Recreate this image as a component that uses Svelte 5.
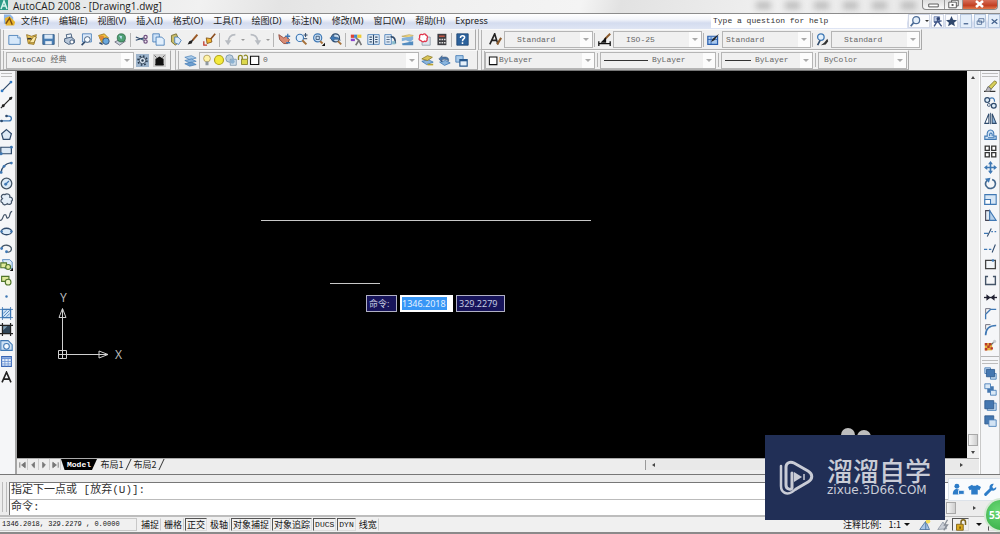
<script>
  const N = '#2f4a6b';
  const B = '#3f78b4';
  const icons = {
    new: `<path d="M1 3h11l3 3v8H1z" fill="#d6e8fa" stroke="${B}"/><path d="M12 3v3h3" fill="#fff" stroke="${B}"/>`,
    open: `<path d="M2 2l6 2 6-2-3 12-7-1z" fill="#f0c95a" stroke="#8a6a1c"/><path d="M5 12l6-8 3 1-3 7z" fill="#fbe9a8" stroke="#8a6a1c"/><path d="M3 7h5" stroke="#333" stroke-width="2"/>`,
    save: `<path d="M1 2h14v12H1z" fill="#4a7fb5" stroke="#2c5580"/><path d="M3 2h10v5H3z" fill="#dbe9f7"/><path d="M4 10h8v4H4z" fill="#e8eef5"/>`,
    print: `<path d="M4 2l6-1 1 5-6 1z" fill="#eef4fa" stroke="${N}"/><path d="M2 7l8-2 4 3v4l-7 2-5-3z" fill="#b9c8da" stroke="${N}"/><circle cx="11" cy="11" r="2.5" fill="#fff" stroke="${N}"/>`,
    preview: `<path d="M3 1h11v10H3z" fill="#dceafa" stroke="${B}"/><circle cx="9" cy="8" r="3.5" fill="#f6fbff" stroke="${N}"/><path d="M6 11l-4 4" stroke="${N}" stroke-width="2"/>`,
    publish: `<path d="M2 3l7-2 5 5-8 6z" fill="#f2c340" stroke="#9a741a"/><circle cx="6" cy="6" r="3" fill="#e08a35"/><circle cx="11" cy="10" r="4" fill="#6aa8dc" stroke="${N}"/><path d="M3 12l4 2" stroke="${N}" stroke-width="2"/>`,
    globe: `<path d="M1 11l8-4 5 3-7 5z" fill="#c9d2dc" stroke="#667"/><circle cx="9" cy="6" r="5" fill="#4f9f74" stroke="#2e6b48"/><path d="M6 3l4 1-1 4z" fill="#b9e2f2"/>`,
    cut: `<path d="M1 5l10 4M1 9l10-3" stroke="${N}" stroke-width="1.4"/><circle cx="13" cy="10.500" r="2" fill="none" stroke="#715080" stroke-width="1.5"/><circle cx="13" cy="5" r="2" fill="none" stroke="#715080" stroke-width="1.5"/>`,
    copy: `<path d="M1 1h8v10H1z" fill="#cfe3f8" stroke="${B}"/><path d="M5 5h7l3 3v7H5z" fill="#e2effc" stroke="${B}"/>`,
    paste: `<path d="M3 3l6-2 4 9-5 5-5-4z" fill="#c9bd6b" stroke="#6d6428"/><path d="M7 5h4l4 4-3 5-5-2z" fill="#dcebfa" stroke="${B}"/>`,
    brush: `<path d="M14 2L8 9" stroke="#9b5a28" stroke-width="2.5"/><path d="M9 8l-2 5-5 1 2-4z" fill="#222"/>`,
    block: `<path d="M15 1L9 8" stroke="#8b4d20" stroke-width="2"/><path d="M4 6l6 1 1 4-6 2z" fill="#f1b735" stroke="#7a4c10"/><path d="M1 10v5h4" fill="none" stroke="#c0392b" stroke-width="1.6"/>`,
    undo: `<path d="M14 2C8 2 5 6 5 13" fill="none" stroke="#b8bcc2" stroke-width="2"/><path d="M1 9h8l-4 6z" fill="#b8bcc2"/>`,
    redo: `<path d="M2 2c6 0 9 4 9 11" fill="none" stroke="#b8bcc2" stroke-width="2"/><path d="M7 9h8l-4 6z" fill="#b8bcc2"/>`,
    pan: `<path d="M1 2l6 4 3-2 4 4-2 5H7L2 8z" fill="#d98b74" stroke="#8a3f30"/><path d="M12 1v6M9 4h6M10 12h5" stroke="${B}" stroke-width="1.6"/>`,
    zoomrt: `<circle cx="6" cy="6" r="4.5" fill="#e1effc" stroke="${B}" stroke-width="1.4"/><path d="M9 9l5 5" stroke="#a6713a" stroke-width="2.4"/><path d="M13 0v5M10.500 2.500h5M11 7h4" stroke="${N}" stroke-width="1.2"/>`,
    zoomwin: `<circle cx="7" cy="6" r="5" fill="#c9dff4" stroke="${B}" stroke-width="1.4"/><path d="M5 4h4v4H5z" fill="none" stroke="${N}"/><path d="M10 10l3 3" stroke="#a6713a" stroke-width="2.400"/><path d="M16 12v4h-4z" fill="#111"/>`,
    zoomprev: `<circle cx="8" cy="6" r="5" fill="#c9dff4" stroke="${N}" stroke-width="1.4"/><path d="M1 6l5-4v3c5 0 6 1 8 4-3-2-5-1-8-1v3z" fill="${B}" stroke="${N}" stroke-width=".6"/><path d="M11 10l4 4" stroke="#a6713a" stroke-width="2.4"/>`,
    props: `<path d="M1 2h4v4H1z" fill="#d43"/><path d="M5 2h4v4H5z" fill="#48c"/><path d="M9 2h5v4H9z" fill="#ec3"/><path d="M1 7h5v3H1z" fill="#84c"/><path d="M7 6l4 3 3 6M11 9l-4 6" stroke="#777" stroke-width="2" fill="none"/>`,
    grid: `<path d="M1 2h14v12H1z" fill="#e6f0fa" stroke="${B}"/><path d="M8 2v12M3 5h3M3 8h3M3 11h3M10 5h3M10 8h3M10 11h3" stroke="${N}" stroke-width="1.4"/>`,
    palette: `<path d="M1 2h8v12H1z" fill="#e6f0fa" stroke="${B}"/><path d="M3 5h4M3 8h4M3 11h4" stroke="${N}"/><path d="M8 5c5-1 6 3 6 8" fill="none" stroke="${N}" stroke-width="2"/><path d="M10 10h4v4h-4z" fill="#8bc"/>`,
    sheet: `<path d="M1 4l9-2 5 1-3 3z" fill="#f0d680" stroke="#a58a35" stroke-width=".6"/><path d="M1 6l14-2v4l-4 3-5-2-5 1z" fill="#82b1da"/><path d="M1 13l14-3v5H2z" fill="#538cc0"/>`,
    markup: `<path d="M5 5h10v10H5z" fill="#dbe5ee" stroke="#8a97a5"/><path d="M2 3c1-2 3-1 4-1 2-2 4 0 4 1 2 0 2 3 1 4 1 3-2 4-3 3-2 2-4 0-5-1-2 0-2-2-1-3z" fill="#fff" stroke="#e0354b" stroke-width="1.6"/>`,
    calc: `<path d="M3 1h11v14H3z" fill="#3c3c40"/><path d="M5 3h7v2H5z" fill="#b54"/><path d="M5 7h2v2H5zM8 7h2v2H8zM11 7h2v2h-2zM5 11h2v2H5zM8 11h2v2H8zM11 11h2v2h-2z" fill="#ddd"/>`,
    help: `<path d="M1 1h14v14H1z" fill="#2c629c" stroke="#1c4472"/><path d="M5.500 6c0-4 6-3 5 0-.500 1.500-2.500 1.500-2.500 4M8 11.500v2" stroke="#fff" stroke-width="1.900" fill="none"/>`,
    textstyle: `<path d="M1 14L7 1l4 13M4 9h5" fill="none" stroke="#222" stroke-width="2"/><path d="M15 6l-5 8" stroke="#8b5a2b" stroke-width="2.600"/>`,
    dimstyle: `<path d="M1 13h14M1 10v6M15 10v6" stroke="#111" stroke-width="1.600"/><path d="M15 1L8 8" stroke="#8b5a2b" stroke-width="2.400"/><path d="M10 5l-7 7h7z" fill="#111"/>`,
    tablestyle: `<path d="M1 4h12v10H1z" fill="#a8c8ee" stroke="#2a5fae" stroke-width="1.500"/><path d="M1 8h12M5 5v9" stroke="#2a5fae"/><path d="M15 1L9 9l-4 2 2-4z" fill="#222"/>`,
    mleader: `<circle cx="6" cy="5" r="4" fill="#e4f1fc" stroke="${B}" stroke-width="1.600"/><path d="M5 9l-3 6" stroke="${N}" stroke-width="2"/><path d="M14 7l-4 5-4 3 6-1 3-4z" fill="#333"/>`,
    gear: `<path d="M0 0h16v16H0z" fill="#9db4cc"/><circle cx="8" cy="8" r="5.500" fill="none" stroke="#26384b" stroke-width="2" stroke-dasharray="2 2.300"/><circle cx="8" cy="8" r="4" fill="#d7e3ef" stroke="#26384b"/><circle cx="8" cy="8" r="1.500" fill="#26384b"/>`,
    myws: `<path d="M0 0h16v16H0z" fill="#cfcfcf"/><path d="M3 6l5-3 5 3v8H3z" fill="#111"/><path d="M2 2l12 12M14 2L2 14" stroke="#111" stroke-dasharray="2 1.500"/>`,
    layers: `<path d="M1 4l8-2 6 3-8 2z" fill="#a9cbea" stroke="${B}" stroke-width=".8"/><path d="M1 8l8-2 6 3-8 2z" fill="#8cb6de" stroke="${B}" stroke-width=".8"/><path d="M1 12l8-2 6 3-8 2z" fill="#6d9fd0" stroke="${B}" stroke-width=".8"/>`,
    bulb: `<circle cx="8" cy="6" r="4.500" fill="#fff3a8" stroke="#a7904a"/><path d="M6 10h4v5H6z" fill="#8f98a0"/>`,
    sun: `<circle cx="8" cy="8" r="6" fill="#f4ea3c" stroke="#b0a31d" stroke-width="1.500"/>`,
    freeze: `<circle cx="6" cy="6" r="5" fill="#bccedd" stroke="#6b89a6"/><path d="M7 7h8v8H7z" fill="#d8e4ee" stroke="#6b89a6"/><circle cx="10" cy="10" r="3" fill="#8db2d2"/>`,
    unlock: `<path d="M2 8V4c0-3 5-3 5 0v4" fill="none" stroke="#8f8a24" stroke-width="1.800"/><path d="M6 7h8v7H6z" fill="#dcd84d" stroke="#77721a"/><path d="M9 3c3-3 6-1 5 4" fill="none" stroke="#8f8a24" stroke-width="1.400"/>`,
    box: `<path d="M2 3h11v11H2z" fill="#fff" stroke="#111" stroke-width="1.500"/>`,
    layprev: `<path d="M1 9l8-2 6 3-8 3z" fill="#8cb6de" stroke="${B}"/><path d="M1 6l7-4 6 2-6 4z" fill="#d9c458" stroke="#8c7a22"/><path d="M8 13h7" stroke="#bba32d" stroke-width="2"/>`,
    layback: `<path d="M2 10l7-2 6 3-7 3z" fill="#8cb6de" stroke="${B}"/><path d="M1 6l4-4v2c5-1 9 0 8 5-2-2-4-3-8-2v3z" fill="#4c76a8" stroke="${N}" stroke-width=".6"/>`,
    laystate: `<path d="M1 2h9v8H1z" fill="#a9cbea" stroke="${B}"/><path d="M6 7h9v8H6z" fill="#e6f1fb" stroke="#27588d" stroke-width="1.400"/><path d="M6 7h9v2H6z" fill="#27588d"/>`,
    line: `<path d="M2 14L14 2" stroke="${N}" stroke-width="1.500"/><circle cx="2.500" cy="13.500" r="1.700" fill="#2f79c4"/><circle cx="13.500" cy="2.500" r="1.700" fill="#2f79c4"/>`,
    xline: `<path d="M1 15L15 1" stroke="#222" stroke-width="1.500"/><circle cx="4" cy="12" r="1.800" fill="#222"/><circle cx="13" cy="3" r="1.800" fill="#222"/>`,
    pline: `<path d="M0 11h11c4 0 4-6 0-6H8" fill="none" stroke="${B}" stroke-width="1.600"/><circle cx="8" cy="5" r="1.600" fill="${N}"/><circle cx="2" cy="11" r="1.600" fill="${N}"/>`,
    polygon: `<path d="M8 2l6 5-2 7H4L2 7z" fill="#dde9f5" stroke="${N}" stroke-width="1.500"/>`,
    rect: `<path d="M1 4h13v8H1z" fill="#dde9f5" stroke="${N}" stroke-width="1.500"/><circle cx="14" cy="4" r="1.800" fill="${B}"/><circle cx="1.500" cy="12" r="1.800" fill="${B}"/>`,
    arc: `<path d="M1 15C2 8 6 3 14 2" fill="none" stroke="${N}" stroke-width="1.500"/><circle cx="14" cy="2.500" r="1.700" fill="${B}"/><circle cx="5" cy="6.500" r="1.700" fill="${B}"/><circle cx="1.500" cy="14" r="1.700" fill="${B}"/>`,
    circle: `<circle cx="8" cy="8" r="6.500" fill="#dcebf8" stroke="#456" stroke-width="1.600"/><path d="M7 9l4-4" stroke="${B}" stroke-width="1.600"/><circle cx="7" cy="9" r="1.800" fill="${B}"/>`,
    cloud: `<path d="M3 7C0 4 3 1 6 2c3-2 7 0 6 3 4 0 4 4 2 5 1 4-3 5-5 3-3 3-6 1-6-1-3-1-2-4 0-5z" fill="#e4eef8" stroke="#445468" stroke-width="1.500"/>`,
    spline: `<path d="M0 14c4 1 3-7 6-7s1 5 4 4 1-8 5-8" fill="none" stroke="#445468" stroke-width="1.500"/>`,
    ellipse: `<ellipse cx="8" cy="8" rx="6.500" ry="4" fill="#dcebf8" stroke="${N}" stroke-width="1.600"/><circle cx="2" cy="8" r="1.500" fill="${B}"/><circle cx="14" cy="8" r="1.500" fill="${B}"/>`,
    earc: `<path d="M2 8c0-6 13-5 12 1-.5 3-3 4-6 3" fill="none" stroke="#456" stroke-width="1.600"/><circle cx="8" cy="12" r="1.700" fill="${B}"/><circle cx="2" cy="8" r="1.700" fill="${B}"/>`,
    insblock: `<path d="M3 2h9l3 3v8H6z" fill="#dcebf8" stroke="${B}"/><path d="M1 6h7v6H1z" fill="#dfe99a" stroke="#51762c" stroke-width="1.400"/><circle cx="10" cy="11" r="3" fill="#dfe99a" stroke="#51762c" stroke-width="1.400"/><path d="M16 12v4h-4z" fill="#111"/>`,
    mkblock: `<path d="M2 3h9v6H2z" fill="#dfe99a" stroke="#51762c" stroke-width="1.400"/><circle cx="10" cy="10" r="3.500" fill="#eef4c4" stroke="#51762c" stroke-width="1.400"/>`,
    point: `<circle cx="8" cy="8" r="1.500" fill="${B}"/>`,
    hatch: `<path d="M3 3h10v10H3z" fill="#cfe3f6" stroke="${B}" stroke-width="1.500"/><path d="M0 3h16M0 13h16M3 0v16M13 0v16M4 8l4-4M4 12l8-8M8 12l4-4" stroke="${B}"/>`,
    gradient: `<path d="M3 3h10v10H3z" fill="#31475a"/><path d="M0 3h16M0 13h16M3 0v16M13 0v16" stroke="#222" stroke-width="1.500"/><path d="M4 4l5 0-5 5z" fill="#86a4b8"/>`,
    region: `<path d="M1 2h9l5 5v7H1z" fill="#cfe2f4" stroke="${B}" stroke-width="1.300"/><circle cx="8" cy="9" r="3.500" fill="#f4f9fd" stroke="${B}" stroke-width="1.300"/>`,
    table: `<path d="M2 2h12v12H2z" fill="#e5effa" stroke="#3865b4" stroke-width="1.300"/><path d="M2 3h12v2H2z" fill="#6c94d6"/><path d="M2 8h12M2 11h12M6 4v10M10 4v10" stroke="#6c94d6"/>`,
    mtext: `<path d="M2.500 14L8 1.500 13.500 14M5 10h6" fill="none" stroke="#222" stroke-width="2"/>`,
    erase: `<path d="M0 14h14" stroke="#333" stroke-width="1.500"/><path d="M13 1l3 2-7 8-4-2z" fill="#d8cf5a" stroke="#77702a"/><path d="M5 8l4 3-2 3H2z" fill="#b9b9c0" stroke="#666"/>`,
    copyobj: `<circle cx="4" cy="5" r="3" fill="#dcebf8" stroke="${N}" stroke-width="1.500"/><circle cx="12" cy="12" r="3" fill="#dcebf8" stroke="${N}" stroke-width="1.500"/><circle cx="6" cy="11" r="1.800" fill="none" stroke="${N}"/><path d="M7 3c4-2 6 0 6 4" fill="none" stroke="${B}" stroke-width="1.500"/>`,
    mirror: `<path d="M6 2v12H1z" fill="#fff" stroke="${N}" stroke-width="1.300"/><path d="M10 2v12h5z" fill="#8fb4da" stroke="${N}" stroke-width="1.300"/><path d="M8 1v14" stroke="${N}"/>`,
    offset: `<path d="M1 14h14v-4h-3c2-10-10-10-8 0H1z" fill="#cfe2f5" stroke="${B}" stroke-width="1.400"/><path d="M5 12h8M7 10c-1-5 4-5 3 0" fill="none" stroke="${B}" stroke-width="1.300"/>`,
    array: `<path d="M1.500 1.500h5v5h-5zM9.500 1.500h5v5h-5zM1.500 9.500h5v5h-5zM9.500 9.500h5v5h-5z" fill="#fff" stroke="#333" stroke-width="1.600"/>`,
    move: `<path d="M8 2v12M2 8h12" stroke="${B}" stroke-width="2"/><path d="M8 0l3 4H5zM8 16l3-4H5zM0 8l4-3v6zM16 8l-4-3v6z" fill="${B}"/>`,
    rotate: `<path d="M4 4c-5 5 0 11 5 10 6-1 7-9 1-11" fill="none" stroke="#44688e" stroke-width="2"/><path d="M1 2l7-1-2 6z" fill="${B}"/>`,
    scale: `<path d="M1 2h14v12H1z" fill="#d7e6f5" stroke="${B}" stroke-width="1.300"/><path d="M1 8h7v6H1z" fill="#fff" stroke="${B}" stroke-width="1.300"/>`,
    stretch: `<path d="M2 2h5v12H2z" fill="#dfeaf5" stroke="#445" stroke-width="1.300"/><path d="M7 2l8 12H7z" fill="#b7d0ea" stroke="${B}" stroke-width="1.300"/>`,
    trim: `<path d="M0 9h5M9 7h2M13 7h2" stroke="${B}" stroke-width="1.400"/><path d="M4 13l5-10" stroke="${N}" stroke-width="1.300"/>`,
    extend: `<path d="M0 9h4M6 9h3" stroke="${B}" stroke-width="1.600"/><path d="M10 13l4-10" stroke="${N}" stroke-width="1.300"/>`,
    breakpt: `<path d="M2 3h12v10H2z" fill="#f3f6f9" stroke="#444" stroke-width="1.600"/><circle cx="11" cy="3" r="1.600" fill="${B}"/>`,
    brk: `<path d="M5 3H2v10h12V3h-3" fill="none" stroke="#445468" stroke-width="1.700"/>`,
    join: `<path d="M0 8h16" stroke="#223" stroke-width="1.600"/><path d="M3 4l5 4-5 4zM13 4L8 8l5 4z" fill="#223"/>`,
    chamfer: `<path d="M2 15V9l6-6h7" fill="none" stroke="${B}" stroke-width="1.600"/><path d="M2 8V2h6" fill="none" stroke="#556"/>`,
    fillet: `<path d="M2 15C2 7 6 3 15 3" fill="none" stroke="${B}" stroke-width="2"/><path d="M2 8V2h6" fill="none" stroke="#556"/>`,
    explode: `<path d="M1 5h9v9H1z" fill="#e6b13a"/><path d="M1 5h3v3H1zM6 5h3v3H6zM4 8h3v3H4zM8 10h3v3H8zM1 11h3v3H1z" fill="#b8392b"/><path d="M9 7l4-4" stroke="#666" stroke-width="1.500"/><circle cx="13" cy="3" r="2" fill="#c9ccd0"/>`,
    front: `<path d="M1 1h7v7H1zM8 8h7v7H8z" fill="#c7dcf0" stroke="${B}"/><path d="M3 3h10v9H3z" fill="#4477b0" stroke="#2c578b"/>`,
    back: `<path d="M4 4h8v8H4z" fill="#4477b0"/><path d="M1 1h7v6H1zM8 9h7v6H8z" fill="#d9e8f6" stroke="${B}"/>`,
    above: `<path d="M4 5h11v9H4z" fill="#c7dcf0" stroke="${B}"/><path d="M1 2h11v10H1z" fill="#4477b0" stroke="#2c578b"/>`,
    under: `<path d="M1 1h11v10H1z" fill="#4477b0" stroke="#2c578b"/><path d="M6 6h9v8H6z" fill="#d2e3f4" stroke="${B}"/>`,
    search: `<circle cx="9" cy="6" r="5" fill="#e4effa" stroke="#4c6c98" stroke-width="1.800"/><path d="M5 10l-4 5" stroke="#4c6c98" stroke-width="2.500"/>`,
    comm: `<path d="M3 1h8v8H3z" fill="#c3cfe6" stroke="#50689a"/><circle cx="9" cy="4" r="2.500" fill="#2e4374"/><path d="M3 15l5-8 6 8M3 9l11-2" stroke="#3f5587" stroke-width="2" fill="none"/>`,
    star: `<path d="M8 0l2.400 5.500 5.600.5-4.300 3.700L13 15l-5-3-5 3 1.300-5.300L0 6l5.600-.5z" fill="#2f466c"/>`,
    min: `<path d="M3 12h8" stroke="#42608c" stroke-width="2.200"/>`,
    restore: `<path d="M5 3h9v6H5zM2 7h8v6H2z" fill="#e9f2fb" stroke="#42608c" stroke-width="1.400"/>`,
    close: `<path d="M3 4l10 8M13 4L3 12" stroke="#42608c" stroke-width="2.200"/>`,
    anno: `<path d="M1 14L9 3l5 11z" fill="#a9c6e6" stroke="#3c6596"/><path d="M9 3v11" stroke="#3c6596"/><circle cx="12" cy="3" r="3" fill="#f3dc59"/>`,
    annoauto: `<path d="M1 14L8 4l5 9z" fill="#c9ced6" stroke="#8a93a0"/><path d="M14 1l-4 7h4l-5 7" fill="none" stroke="#878d96" stroke-width="1.800"/>`,
    lock: `<path d="M2 7h9v8H2z" fill="#d9a921" stroke="#6f5208"/><path d="M8 7V4c0-4 6-4 6 0v4" fill="none" stroke="#7d641b" stroke-width="2"/><path d="M6 10h1.500v3H6z" fill="#4b3805"/>`
  };

  const menus = ['文件(F)', '编辑(E)', '视图(V)', '插入(I)', '格式(O)', '工具(T)', '绘图(D)', '标注(N)', '修改(M)', '窗口(W)', '帮助(H)', 'Express'];
  const standard = [
    ['new', 'open', 'save'],
    ['print', 'preview', 'publish', 'globe'],
    ['cut', 'copy', 'paste', 'brush', 'block'],
    ['undo', '', 'redo', ''],
    ['pan', 'zoomrt', 'zoomwin', 'zoomprev'],
    ['props', 'grid', 'palette', 'sheet', 'markup', 'calc'],
    ['help']
  ];
  const styles = [
    { icon: 'textstyle', label: '文字样式', value: 'Standard', indent: 12 },
    { icon: 'dimstyle', label: '标注样式', value: 'ISO-25', indent: 12 },
    { icon: 'tablestyle', label: '表格样式', value: 'Standard', indent: 3 },
    { icon: 'mleader', label: '多重引线样式', value: 'Standard', indent: 12 }
  ];
  const draw = ['line', 'xline', 'pline', 'polygon', 'rect', 'arc', 'circle', 'cloud', 'spline', 'ellipse', 'earc', 'insblock', 'mkblock', 'point', 'hatch', 'gradient', 'region', 'table', 'mtext'];
  const modify = ['erase', 'copyobj', 'mirror', 'offset', 'array', 'move', 'rotate', 'scale', 'stretch', 'trim', 'extend', 'breakpt', 'brk', 'join', 'chamfer', 'fillet', 'explode'];
  const order = ['front', 'back', 'above', 'under'];
  const modes = $state([
    { name: '捕捉', on: false }, { name: '栅格', on: false }, { name: '正交', on: true },
    { name: '极轴', on: false }, { name: '对象捕捉', on: true }, { name: '对象追踪', on: true },
    { name: 'DUCS', on: true, latin: true }, { name: 'DYN', on: true, latin: true }, { name: '线宽', on: false }
  ]);
</script>

{#snippet icon(name)}
  <svg class="icon" viewBox="0 0 16 16" fill="none" aria-hidden="true">{@html icons[name]}</svg>
{/snippet}

{#snippet tool(name)}
  <button class="tool" aria-label={name}>{@render icon(name)}</button>
{/snippet}

{#snippet combo(label, value, width, indent, stroke)}
  <span class="combo" style:width="{width}px">
    {#if stroke}<span class="stroke" style:width="{stroke}px"></span>{/if}
    <select aria-label={label} style:padding-left="{indent}px"><option>{value}</option></select>
    <i class="drop"></i>
  </span>
{/snippet}

<div class="app">
  <header class="title">
    <svg class="logo" viewBox="0 0 10 12" aria-hidden="true"><path d="M0 0h8v10H0z" fill="#2d9a86"/><path d="M1 9l3-8 3 8M2 6h4" stroke="#d8f5ee" stroke-width="1.500" fill="none"/></svg>
    <h1>AutoCAD 2008 - [Drawing1.dwg]</h1>
    <div class="ghost"><i></i><i></i><i></i><i></i><i></i><i></i></div>
    <div class="winbtns">
      <button aria-label="最小化"><svg viewBox="0 0 22 9"><path d="M6 4h10v3H6z" fill="#fff" stroke="#555"/></svg></button>
      <button aria-label="还原"><svg viewBox="0 0 18 9"><path d="M7 0h7v6H7z" fill="#fff" stroke="#555"/><path d="M4 2h8v6H4z" fill="#fff" stroke="#555"/><path d="M7 4h2v2H7z" fill="#555"/></svg></button>
      <button class="x" aria-label="关闭"><svg viewBox="0 0 34 9"><path d="M13 1l7 6M20 1l-7 6" stroke="#fff" stroke-width="2.500"/></svg></button>
    </div>
  </header>

  <nav class="menu">
    <svg class="doc" viewBox="0 0 14 13" aria-hidden="true"><path d="M1 0h7l3 3v7H1z" fill="#8fb6e6"/><path d="M2 4l5-2 6 6-1 4H3z" fill="#e9b52c"/><path d="M3 10l4-6 3 7" stroke="#7a4b12" fill="none" stroke-width="1.500"/></svg>
    {#each menus as m}<button>{m}</button>{/each}
    <input class="ask" aria-label="help" value="Type a question for help" />
    <button class="util wide" aria-label="搜索">{@render icon('search')}<i class="tri dark"></i></button>
    <button class="util" aria-label="通讯中心">{@render icon('comm')}</button>
    <button class="util" aria-label="收藏夹">{@render icon('star')}</button>
    <span class="mdi">
      <button aria-label="最小化文档">{@render icon('min')}</button>
      <button aria-label="还原文档">{@render icon('restore')}</button>
      <button aria-label="关闭文档">{@render icon('close')}</button>
    </span>
  </nav>

  <div class="row">
    <div class="bar std">
      {#each standard as group, g}
        {#if g}<i class="sep"></i>{/if}
        {#each group as name}
          {#if name}{@render tool(name)}{:else}<button class="more" aria-label="更多"><i class="tri"></i></button>{/if}
        {/each}
      {/each}
    </div>
    <div class="bar sty">
      {#each styles as s, i}
        {#if i}<i class="sep"></i>{/if}
        {@render tool(s.icon)}
        {@render combo(s.label, s.value, 89, s.indent, 0)}
      {/each}
    </div>
  </div>

  <div class="row">
    <div class="bar ws">
      {@render combo('工作空间', 'AutoCAD 经典', 128, 5, 0)}
      {@render tool('gear')}{@render tool('myws')}
    </div>
    <div class="bar lay">
      {@render tool('layers')}
      <span class="combo layer">
        {@render icon('bulb')}{@render icon('sun')}{@render icon('freeze')}{@render icon('unlock')}{@render icon('box')}
        <select aria-label="图层"><option>0</option></select>
        <i class="drop"></i>
      </span>
      {@render tool('layprev')}{@render tool('layback')}{@render tool('laystate')}
    </div>
    <div class="bar prop">
      <span class="combo color">{@render icon('box')}<select aria-label="颜色"><option>ByLayer</option></select><i class="drop"></i></span>
      <i class="sep"></i>
      {@render combo('线型', 'ByLayer', 116, 2, 44)}
      <i class="sep"></i>
      {@render combo('线宽', 'ByLayer', 92, 2, 26)}
      <i class="sep"></i>
      {@render combo('打印样式', 'ByColor', 89, 5, 0)}
    </div>
  </div>

  <main>
    <aside class="side left">
      <i class="grip"></i>
      <div class="stack draw">{#each draw as d}{@render tool(d)}{/each}</div>
    </aside>

    <section class="view">
      <div class="canvas">
        <svg class="drawing" aria-hidden="true">
          <path d="M244 149.500h330M313 212.500h50" stroke="#c8c8c8" />
        </svg>
        <svg class="ucs" viewBox="0 0 76 76" aria-hidden="true">
          <g fill="none" stroke="#d0d0d0">
            <path d="M4.500 63.500h8v8h-8zM8.500 71.500V22M4.500 67.500H54M8.500 21.500l-3.500 9h7zM54 67.500l-9-3.500v7z" />
          </g>
          <text x="6" y="15">Y</text><text x="61" y="72">X</text>
        </svg>
        <i class="blob"></i><i class="blob second"></i>
        <div class="dyn">
          <label for="dynx">命令:</label>
          <span class="edit"><input id="dynx" value="1346.2018" /></span>
          <input class="y" aria-label="Y" value="329.2279" />
        </div>
      </div>
      <div class="vscroll"><i class="up"></i><span></span><i class="thumb"></i><i class="down"></i></div>
      <div class="tabs">
        <button class="nav" aria-label="首个"><svg viewBox="0 0 10 8"><path d="M2 1v6M8 1L4 4l4 3z"/></svg></button>
        <button class="nav" aria-label="上一个"><svg viewBox="0 0 10 8"><path d="M6 1L3 4l3 3z"/></svg></button>
        <button class="nav" aria-label="下一个"><svg viewBox="0 0 10 8"><path d="M3 1l3 3-3 3z"/></svg></button>
        <button class="nav" aria-label="末个"><svg viewBox="0 0 10 8"><path d="M8 1v6M2 1l4 3-4 3z"/></svg></button>
        <button class="tab model">Model</button>
        <button class="tab">布局1</button><i class="slash"></i>
        <button class="tab">布局2</button><i class="slash"></i>
        <div class="hscroll"><i class="lt"></i><i class="rt"></i></div>
      </div>
    </section>

    <aside class="side right">
      <i class="grip"></i>
      <div class="stack modify">{#each modify as d}{@render tool(d)}{/each}</div>
      <hr />
      <i class="grip"></i>
      <div class="stack order">{#each order as d}{@render tool(d)}{/each}</div>
    </aside>
  </main>

  <section class="command">
    <i class="vgrip"></i>
    <div class="console">
      <p>指定下一点或 [放弃(U)]:</p>
      <div class="prompt">
        <label for="cmd">命令:</label><input id="cmd" />
        <div class="cscroll"><i class="thumb"></i><i class="rt"></i></div>
      </div>
    </div>
  </section>

  <footer>
    <output>1346.2018, 329.2279 , 0.0000</output>
    {#each modes as m}
      <button class:on={m.on} class:latin={m.latin} aria-pressed={m.on} onclick={() => (m.on = !m.on)}>{m.name}</button>
    {/each}
    <span class="scale">注释比例:<b>1:1</b><i class="tri black"></i></span>
    <button class="st" aria-label="注释可见性">{@render icon('anno')}</button>
    <button class="st" aria-label="自动缩放">{@render icon('annoauto')}</button>
    <button class="st on" aria-label="锁定">{@render icon('lock')}</button>
    <button class="st" aria-label="状态栏菜单"><i class="tri black"></i></button>
    <button class="st end on" aria-label="全屏"></button>
  </footer>

  <div class="float">
    <svg viewBox="0 0 16 16"><circle cx="6" cy="4" r="3" fill="#2d7cc8"/><path d="M1 14c0-9 8-7 9-4v4z" fill="#2d7cc8"/><path d="M8 9h7v5H8z" fill="#2d7cc8" stroke="#fff"/></svg>
    <svg viewBox="0 0 16 16"><path d="M5 2c1 2 5 2 6 0l5 3-2 4-2-1v6H4V8L2 9 0 5z" fill="#2d7cc8"/></svg>
    <svg viewBox="0 0 16 16"><path d="M2 14l7-7" stroke="#2d7cc8" stroke-width="3.500" stroke-linecap="round"/><path d="M12 1c-4-1-7 4-4 7s8 1 7-3l-3 2-2-2z" fill="#2d7cc8"/></svg>
  </div>
  <div class="ball">53</div>

  <div class="brand">
    <svg viewBox="0 0 36 38" aria-hidden="true">
      <path d="M13 15v15c0 2-6 2-6-3V9c0-4 4-6 8-4l14 8c5 3 5 8 0 11L17 31" fill="none" stroke="#c9ccd6" stroke-width="3" stroke-linecap="round" stroke-linejoin="round"/>
      <path d="M2 8v20c0 7 6 9 11 6l4-3" fill="none" stroke="#c9ccd6" stroke-width="2.500" stroke-linecap="round"/>
      <path d="M15 14l8 5-8 5z" fill="#c9ccd6"/><path d="M25 16v6" stroke="#c9ccd6" stroke-width="1.500"/>
    </svg>
    <div><strong>溜溜自学</strong><span>zixue.3D66.COM</span></div>
  </div>
</div>

<style>
  :global(body) { margin: 0; background: #f0f0f0; overflow: hidden; }
  .app { position: relative; display: flex; flex-direction: column; height: 100vh; color: #222; background: #f0f0f0; font: 9px/12px "Noto Sans", "Noto Sans CJK SC", sans-serif; overflow: hidden; }
  .app * { box-sizing: border-box; }
  button { display: flex; align-items: center; justify-content: center; padding: 0; border: 0; background: none; color: inherit; font: inherit; white-space: nowrap; flex: none; }
  input, select { min-width: 0; padding: 0; border: 0; border-radius: 0; outline: 0; background: none; color: inherit; font: inherit; appearance: none; }
  i { display: block; flex: none; }
  .icon { width: 13px; height: 13px; flex: none; }
  .tri { border: 3px solid transparent; border-top-color: #a8a8a8; border-bottom: 0; }
  .tri.dark { border-width: 2px; border-top-color: #333; border-bottom: 0; }
  .tri.black { border-top-color: #111; }

  .title { display: flex; flex: none; height: 13px; background: linear-gradient(105deg, #dfe3e3 0, #f1f1f1 20%, #e4e4e4 28%, #efefef 42%, #f4f4f4 58%, #e2e2e2 62%, #efefef 76%, #e6e6e6 100%); }
  .logo { width: 10px; height: 12px; margin-right: 3px; }
  h1 { margin: 0; font: 10px/12px "Open Sans", "Noto Sans", sans-serif; color: #1c1c1c; flex: 1; white-space: nowrap; }
  .ghost { display: flex; gap: 14px; padding: 2px 6px 0 0; filter: blur(3px); }
  .ghost i { width: 15px; height: 7px; background: #b8b8b8; }
  .winbtns { display: flex; height: 10px; margin-right: 2px; border: 1px solid #888; border-top: 0; border-radius: 0 0 4px 4px; overflow: hidden; background: linear-gradient(#ddd, #f8f8f8); }
  .winbtns button { border-right: 1px solid #999; }
  .winbtns button:nth-child(1) { width: 22px; }
  .winbtns button:nth-child(2) { width: 18px; }
  .winbtns .x { width: 34px; border: 0; background: linear-gradient(#d8705a, #c23f22 60%, #e0774a); }
  .winbtns svg { width: 100%; height: 9px; }

  .menu { display: flex; flex: none; align-items: stretch; gap: 10px; height: 16px; padding: 0 0 1px 3px; border-top: 1px solid #8c8c8c; background: linear-gradient(#fff, #f4f6fb 35%, #d4dcef 60%, #dfe5f4); }
  .doc { width: 13px; height: 13px; margin-right: -5px; }
  .ask { width: 196px; margin-left: auto; padding-left: 2px; background: #fff; font: 8px/12px "Liberation Mono", monospace; color: #333; }
  .util { width: 13px; margin-left: -9px; background: #fbfcfe; border: 1px solid #d2d8e6; }
  .util.wide { width: 22px; gap: 4px; }
  .util .icon { width: 11px; height: 11px; }
  .mdi { display: flex; gap: 2px; margin-left: -8px; }
  .mdi button { width: 12px; background: #e4eefa; border: 1px solid #b8c9e0; }
  .mdi .icon { width: 9px; height: 9px; }

  .row { display: flex; flex: none; height: 21px; background: #f0f0f0; }
  .row + .row { border-bottom: 1px solid #777; }
  .bar { display: flex; align-items: center; flex: none; border: 1px solid #fafafa; border-right-color: #a9a9a9; border-bottom-color: #b2b2b2; border-left: 4px double #b4b4b4; }
  .std { padding: 0 4px 0 2px; }
  .sty { margin-left: 2px; padding: 0 1px 0 5px; }
  .ws { padding: 0 2px 0 2px; }
  .lay { margin-left: 4px; padding: 0 7px 0 3px; }
  .prop { margin-left: 3px; padding: 0 1px 0 0; }
  .tool { width: 17px; height: 16px; }
  .more { width: 8px; }
  .more .tri { border-width: 2px; border-top-color: #999; border-bottom: 0; }
  .sep { width: 1px; height: 14px; margin: 0 1px 0 1px; background: #b5b5b5; }
  .std .sep { margin-right: 2px; }
  .prop .sep { margin: 0 2px; }
  .combo { display: flex; align-items: center; height: 17px; border: 1px solid #b5b5b5; background: #f0f0f0; color: #666; font: 8px/14px "Liberation Mono", "Noto Sans CJK SC", monospace; }
  .combo select { flex: 1; height: 15px; }
  .drop { position: relative; width: 12px; align-self: stretch; background: #fcfcfc; }
  .drop::after { content: ""; position: absolute; left: 3px; top: 6px; border: 3px solid transparent; border-top-color: #aaa; border-bottom: 0; }
  .stroke { height: 1px; margin-left: 3px; margin-right: 2px; background: #333; flex: none; }
  .layer { width: 220px; padding-left: 1px; }
  .layer .icon { width: 12px; height: 12px; }
  .layer select { padding-left: 2px; }
  .color { width: 110px; padding-left: 2px; }
  .color .icon { width: 11px; height: 11px; }

  main { display: flex; flex: 1; min-height: 0; }
  .side { flex: none; display: flex; flex-direction: column; background: #f5f6f8; }
  .left { width: 17px; border-right: 2px solid #a5a5a5; padding-right: 2px; }
  .right { width: 20px; border-left: 1px solid #c9c9c9; border-right: 1px solid #c9c9c9; align-items: center; }
  .grip { height: 4px; margin: 2px 1px 1px; border: 1px solid #bdbdbd; border-width: 1px 0; align-self: stretch; }
  .stack { display: grid; grid-auto-rows: 1fr; justify-content: center; }
  .stack .tool { height: auto; }
  .stack.draw { height: 308px; }
  .stack.modify { height: 276px; }
  .stack.order { height: 65px; }
  hr { width: 100%; margin: 2px 0 1px; border: 0; border-top: 1px solid #b5b5b5; }

  .view { flex: 1; min-width: 0; display: grid; grid-template: 1fr 16px / 1fr 12px; border-right: 1px solid #fff; background: #eee; }
  .canvas { position: relative; background: #000; overflow: hidden; }
  .drawing { position: absolute; inset: 0; width: 100%; height: 100%; }
  .ucs { position: absolute; left: 37px; top: 216px; width: 76px; height: 76px; }
  .ucs text { font: 12px "Noto Sans", sans-serif; fill: #b8b8b8; }
  .blob { position: absolute; right: 112px; bottom: 16px; width: 14px; height: 14px; border-radius: 50%; background: #bdbdbd; }
  .blob.second { right: 96px; bottom: 14px; }
  .dyn { position: absolute; left: 349px; top: 224px; display: flex; gap: 3px; color: #c4cbe0; line-height: 15px; }
  .dyn label, .dyn .y { height: 17px; border: 1px solid #b0b0c4; background: #17145a; padding: 0 2px; }
  .dyn label { width: 31px; }
  .dyn .y { width: 49px; }
  .edit { width: 53px; height: 17px; padding: 2px; background: #fff; }
  .edit input { display: block; width: 45px; height: 13px; background: #3796f6; color: #e4f1ff; }
  .vscroll { display: flex; flex-direction: column; align-items: center; padding: 5px 0 4px; background: #f0f0f0; }
  .vscroll span { flex: 1; }
  .up, .down, .lt, .rt { border: 2px solid transparent; }
  .up { border-bottom: 3px solid #444; border-top: 0; }
  .down { border-top: 3px solid #444; border-bottom: 0; margin-top: 5px; }
  .lt { border-right: 3px solid #444; border-left: 0; }
  .rt { border-left: 3px solid #444; border-right: 0; }
  .thumb { width: 10px; height: 12px; border: 1px solid #a8a8a8; background: linear-gradient(90deg, #f6f6f6, #cfcfcf); }
  .tabs { grid-column: 1 / 3; display: flex; align-items: center; height: 12px; background: #ededed; border-top: 1px solid #aaa; }
  .nav { width: 11px; border-right: 1px solid #ccc; height: 11px; }
  .nav svg { width: 9px; height: 8px; fill: #777; stroke: #777; stroke-width: 1; }
  .tab { width: 30px; height: 11px; font: 9px/11px "Noto Sans CJK SC", sans-serif; color: #222; }
  .tab.model { width: 36px; color: #fff; background: #000; font: bold 8px/11px "Liberation Mono", monospace; clip-path: polygon(0 0, 100% 0, 86% 100%, 10% 100%); }
  .slash { width: 1px; height: 11px; margin: 0 1px; background: #333; transform: skewX(-25deg); }
  .hscroll { display: flex; align-items: center; justify-content: space-between; width: 334px; height: 10px; margin-left: auto; padding: 0 16px 0 6px; border-left: 1px solid #999; background: #e9e9e9; }

  .command { display: flex; flex: none; height: 43px; border-top: 1px solid #777; border-bottom: 2px solid #bdbdbd; background: #ececec; padding-top: 7px; }
  .vgrip { width: 5px; margin: 0 2px 3px; border: 1px solid #bbb; border-width: 0 1px; }
  .console { flex: 1; min-width: 0; border-top: 1px solid #777; border-left: 1px solid #777; background: #fff; font: 11px/15px "Liberation Mono", "Noto Sans CJK SC", monospace; color: #333; }
  .console p { margin: 0; height: 17px; padding: 0 1px; border-bottom: 1px solid #bbb; }
  .prompt { display: flex; height: 16px; padding-left: 1px; }
  .prompt input { flex: 1; }
  .cscroll { display: flex; align-items: center; justify-content: space-between; width: 230px; padding: 0 24px 0 176px; background: #ececec; }

  footer { display: flex; flex: none; align-items: center; gap: 1px; height: 17px; padding-right: 0; border-bottom: 2px solid #8a8a8a; font: 9px/12px "Noto Sans CJK SC", sans-serif; color: #111; }
  output { width: 137px; height: 13px; padding-left: 2px; border: 1px solid #c8c8c8; border-left: 0; font: 7px/11px "Liberation Mono", monospace; white-space: pre; margin-right: 1px; }
  footer button { height: 13px; padding: 0 1px; border: 1px solid transparent; border-right-color: #ccc; }
  footer button.on { border-color: #555 #ddd #ddd #555; }
  footer button.latin { font: 8px/11px "Liberation Mono", monospace; }
  .scale { display: flex; align-items: center; gap: 3px; margin: 0 5px 0 auto; }
  .scale b { font-weight: 400; margin-left: 4px; }
  footer .st { width: 17px; border-right-color: transparent; }
  footer .st .icon { width: 12px; height: 12px; }
  footer .end { width: 12px; }

  .float { position: absolute; right: 0; bottom: 33px; display: flex; gap: 3px; align-items: center; width: 52px; height: 23px; padding-left: 3px; background: #f9fbfd; border: 1px solid #dde3ea; border-right: 0; }
  .float svg { width: 13px; height: 13px; }
  .ball { position: absolute; right: -18px; bottom: 2px; width: 34px; height: 34px; padding-left: 3px; border: 2px solid #d5e8d4; border-radius: 50%; background: radial-gradient(circle at 40% 35%, #68d873, #2fa540); color: #fff; font: bold 10px/30px "Noto Sans", sans-serif; }
  .brand { position: absolute; right: 55px; bottom: 14px; display: flex; width: 180px; height: 85px; padding: 22px 0 0 14px; gap: 12px; background: #212f56; color: #c9ccd6; }
  .brand svg { width: 36px; height: 38px; margin-top: 1px; flex: none; }
  .brand div { display: flex; flex-direction: column; }
  .brand strong { font: 500 26px/26px "Noto Sans CJK SC", sans-serif; white-space: nowrap; }
  .brand span { font: 12px/14px "DejaVu Sans", sans-serif; }
</style>
